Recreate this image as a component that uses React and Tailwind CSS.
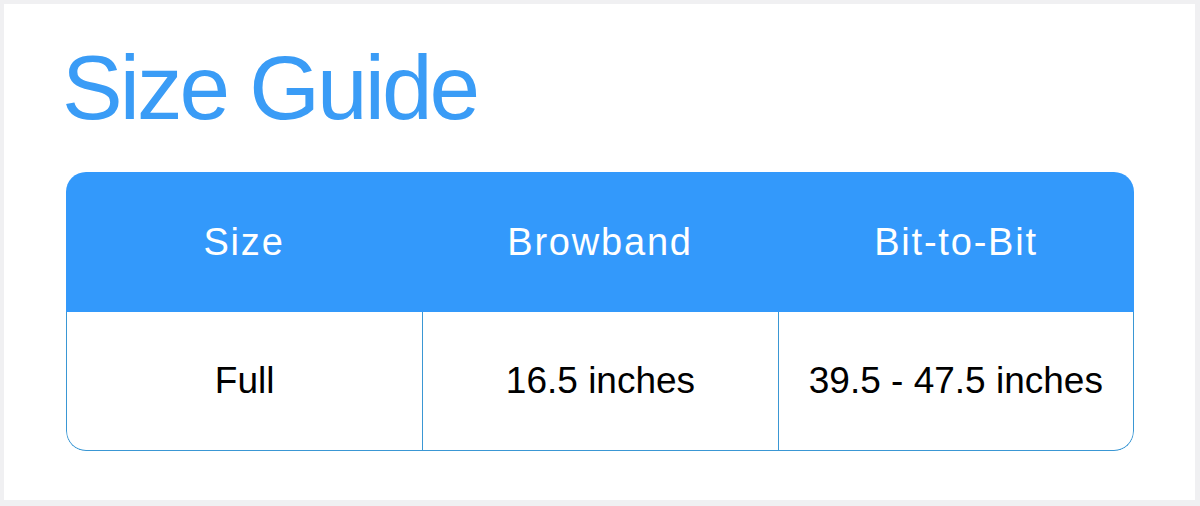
import React from 'react';

const rows = [
    { size: 'Full', browband: '16.5 inches', bit: '39.5 - 47.5 inches' },
];

const headers = ['Size', 'Browband', 'Bit-to-Bit'];

export default function App() {
    return (
        <div className="w-[1200px] h-[506px] bg-[#f0f0f2] pt-[4px] pl-[4px] pr-[5px] pb-[6px]" style={{ fontFamily: '"Liberation Sans", Arial, sans-serif' }}>
            <div className="h-full bg-white pl-[58px] pt-[37px]">
                <h1 className="text-[91px] leading-[93px] tracking-[-3px] text-[#3a9cf6] font-normal">Size Guide</h1>

                <div className="mt-[38px] ml-[4px] w-[1068px] rounded-[20px] overflow-hidden">
                    <div className="grid grid-cols-3 h-[140px] bg-[#3399fb]">
                        {headers.map((h) => (
                            <div key={h} className="flex items-center justify-center text-white text-[38px] tracking-[1.8px]">
                                {h}
                            </div>
                        ))}
                    </div>
                    {rows.map((r) => (
                        <div key={r.size} className="grid grid-cols-3 h-[139px] border-x-[1.5px] border-b-[1.5px] border-[#3a97d4] rounded-b-[20px]">
                            <div className="flex items-center justify-center text-black text-[37px]">{r.size}</div>
                            <div className="flex items-center justify-center text-black text-[37px] border-l-[1.5px] border-[#3a97d4]">{r.browband}</div>
                            <div className="flex items-center justify-center text-black text-[37px] border-l-[1.5px] border-[#3a97d4]">{r.bit}</div>
                        </div>
                    ))}
                </div>
            </div>
        </div>
    );
}
